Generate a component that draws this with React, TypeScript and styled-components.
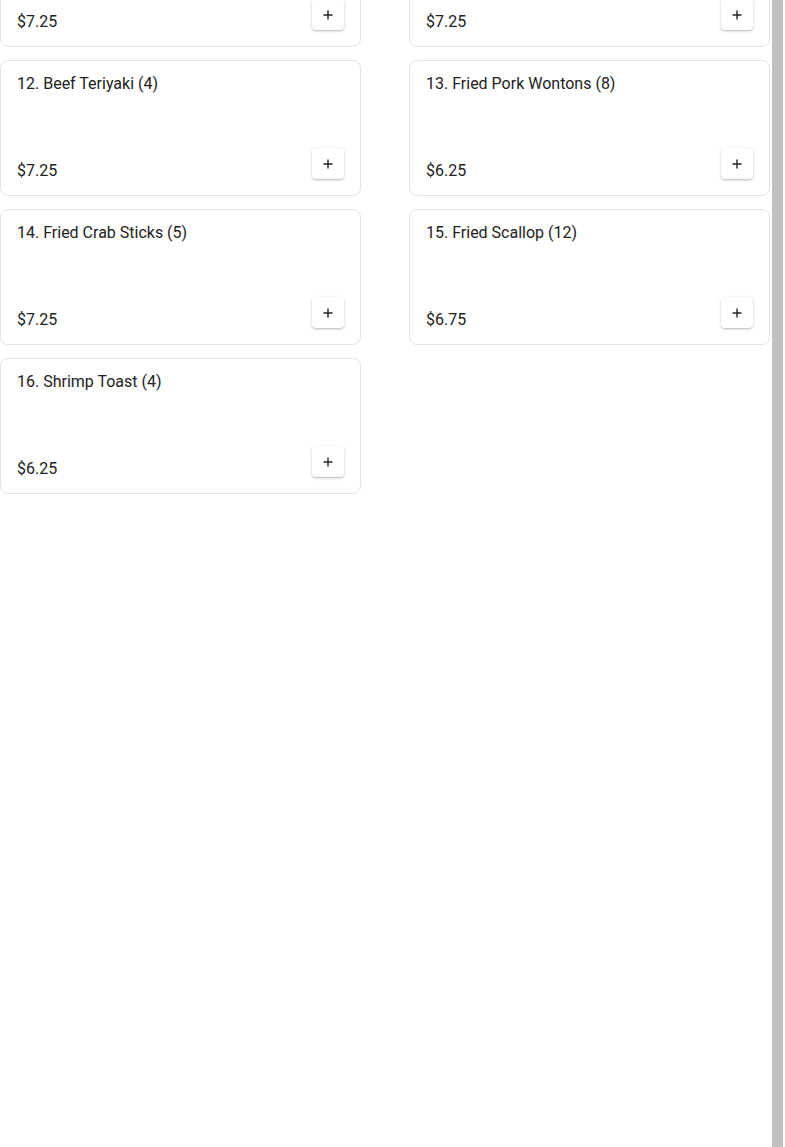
import styled, { createGlobalStyle } from 'styled-components';

const GlobalStyle = createGlobalStyle`
  html, body {
    margin: 0;
    padding: 0;
    background: #ffffff;
    font-family: Roboto, "Liberation Sans", sans-serif;
    color: #212121;
  }
`;

// Css Styling
const Page = styled.div`
  display: flex;
  height: 100vh;
  overflow: hidden;
`;

const MenuList = styled.div`
  width: 770px;
  flex-shrink: 0;
  margin-top: -89px;
  display: grid;
  grid-template-columns: 361px 361px;
  column-gap: 48px;
  row-gap: 13px;
  align-content: start;
`;

const SideRail = styled.div`
  width: 11px;
  margin-left: 2px;
  background-color: #c1c1c1;
  flex-shrink: 0;
`;

const ItemCard = styled.div`
  box-sizing: border-box;
  height: 136px;
  border: 1px solid #e2e2e2;
  border-radius: 8px;
  padding: 11px 16px 16px 16px;
  display: flex;
  flex-direction: column;
  justify-content: space-between;
`;

const ItemName = styled.div`
  font-size: 16px;
  line-height: 24px;
  color: #222222;
`;

const ItemFooter = styled.div`
  display: flex;
  justify-content: space-between;
  align-items: flex-end;
`;

const ItemPrice = styled.span`
  font-size: 16px;
  line-height: 16px;
  color: #222222;
`;

const AddButton = styled.button`
  width: 32px;
  height: 31px;
  padding: 0;
  border: none;
  border-radius: 4px;
  background-color: #ffffff;
  box-shadow: 0 1px 3px rgba(0, 0, 0, 0.22), 0 1px 1px rgba(0, 0, 0, 0.08);
  display: flex;
  align-items: center;
  justify-content: center;
  cursor: pointer;
`;

const items = [
  { name: '10. Chicken Teriyaki (4)', price: '$7.25' },
  { name: '11. Fried Chicken Wings (4)', price: '$7.25' },
  { name: '12. Beef Teriyaki (4)', price: '$7.25' },
  { name: '13. Fried Pork Wontons (8)', price: '$6.25' },
  { name: '14. Fried Crab Sticks (5)', price: '$7.25' },
  { name: '15. Fried Scallop (12)', price: '$6.75' },
  { name: '16. Shrimp Toast (4)', price: '$6.25' },
];

const PlusIcon = () => (
  <svg width="10" height="10" viewBox="0 0 10 10">
    <path d="M5 0.5v9M0.5 5h9" stroke="#222" strokeWidth="1.4" />
  </svg>
);

const App = () => {
  return (
    <Page>
      <GlobalStyle />
      <MenuList>
        {items.map((item) => (
          <ItemCard key={item.name}>
            <ItemName>{item.name}</ItemName>
            <ItemFooter>
              <ItemPrice>{item.price}</ItemPrice>
              <AddButton aria-label='Add'>
                <PlusIcon />
              </AddButton>
            </ItemFooter>
          </ItemCard>
        ))}
      </MenuList>
      <SideRail />
    </Page>
  );
};

export default App;
